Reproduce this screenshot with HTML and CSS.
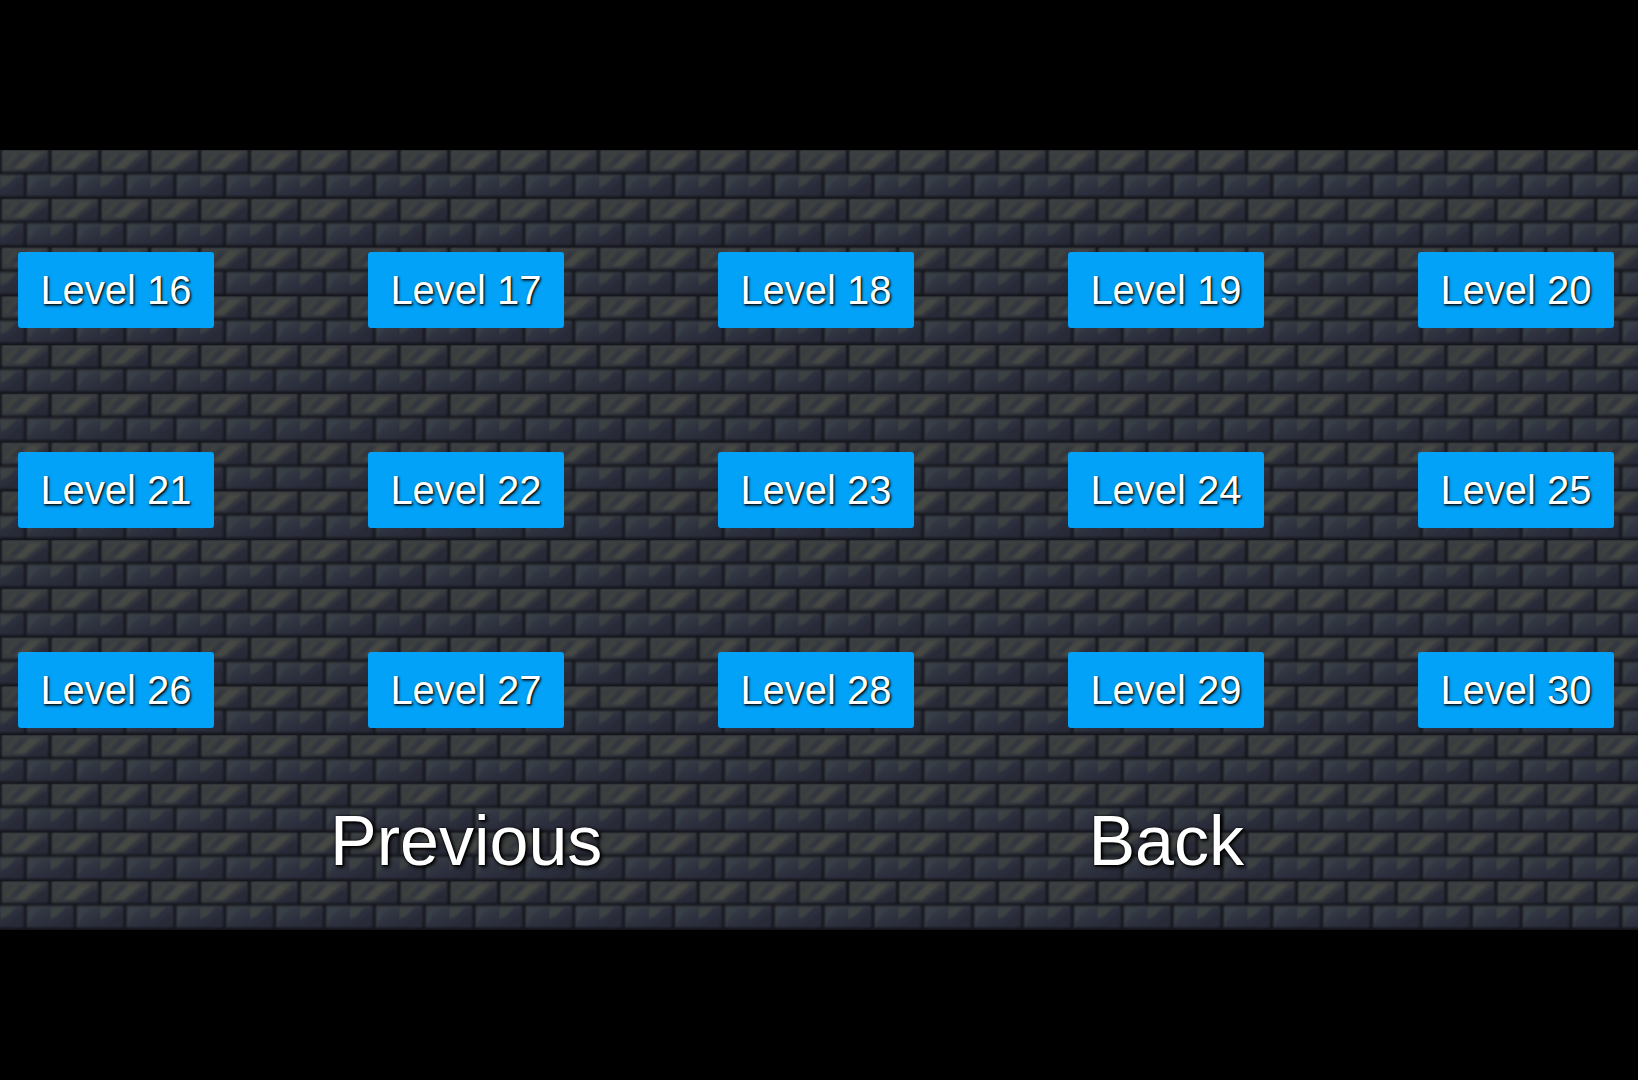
FILE: index.html
```html
<!DOCTYPE html>
<html lang="en">
<head>
  <meta charset="UTF-8">
  <meta name="viewport" content="width=device-width, initial-scale=1.0">
  <title>Levels</title>
  <link rel="stylesheet" href="styles.css">
</head>
<body>

  <main class="game">
    <!-- brick wall -->
    <svg class="wall" width="1638" height="780" aria-hidden="true">
      <defs>
        <linearGradient id="stone" x1="0" y1="0" x2="1" y2="1">
          <stop offset="0" stop-color="#3a3f42"/>
          <stop offset=".5" stop-color="#373a3f"/>
          <stop offset="1" stop-color="#252737"/>
        </linearGradient>
        <linearGradient id="slate" x1="0" y1="0" x2="1" y2="1">
          <stop offset="0" stop-color="#384048"/>
          <stop offset=".55" stop-color="#2c2f3d"/>
          <stop offset="1" stop-color="#252735"/>
        </linearGradient>
        <filter id="soft" color-interpolation-filters="sRGB"><feGaussianBlur stdDeviation="1"/></filter>
        <pattern id="bricks" x=".4" width="49.86" height="48.75" patternUnits="userSpaceOnUse">
          <rect width="50" height="49" fill="#14151b"/>
          <g filter="url(#soft)">
            <!-- top brick -->
            <rect x="1.6" y="0" width="46.4" height="21.8" fill="url(#stone)"/>
            <path d="M13 19L29 3H42L24 19Z" fill="#454843"/>
            <path d="M4 14L13 4H19L7 18Z" fill="#3e423e"/>
            <path d="M10 15L20 5H26L17 14Z" fill="#31353f"/>
            <path d="M27 21L46 7V21Z" fill="#282a38"/>
            <path d="M2.4 21V.8H47" fill="none" stroke="#464a48" stroke-width="1.3"/>
            <!-- bottom bricks -->
            <rect x="-22" y="24.5" width="45.5" height="21.8" fill="url(#slate)"/>
            <rect x="26.6" y="24.5" width="46" height="21.8" fill="url(#slate)"/>
            <path d="M0 38V26H16L7 35Z" fill="#3c4142"/>
            <path d="M6 46L21 31V46Z" fill="#282a38"/>
            <path d="M28 42V27H42L34 33Z" fill="#383f47"/>
            <path d="M27.4 46V25.4H50M0 25.4H22" fill="none" stroke="#3d4347" stroke-width="1.3"/>
          </g>
        </pattern>
      </defs>
      <rect width="1638" height="780" fill="url(#bricks)"/>
    </svg>

    <div class="levels">
      <button class="level">Level 16</button>
      <button class="level">Level 17</button>
      <button class="level">Level 18</button>
      <button class="level">Level 19</button>
      <button class="level">Level 20</button>
      <button class="level">Level 21</button>
      <button class="level">Level 22</button>
      <button class="level">Level 23</button>
      <button class="level">Level 24</button>
      <button class="level">Level 25</button>
      <button class="level">Level 26</button>
      <button class="level">Level 27</button>
      <button class="level">Level 28</button>
      <button class="level">Level 29</button>
      <button class="level">Level 30</button>
    </div>

    <nav class="menu">
      <a href="#" class="menu-link">Previous</a>
      <a href="#" class="menu-link">Back</a>
    </nav>
  </main>

</body>
</html>
```
FILE: styles.css
```css
* {
  margin: 0;
  padding: 0;
  box-sizing: border-box;
}
body {
  height: 1080px;
  padding-top: 150px;
  background-color: #000;
  font-family: "Liberation Sans", Arial, sans-serif;
  overflow: hidden;
}

.game {
  position: relative;
  width: 1638px;
  height: 780px;
  padding: 102px 0 0 18px;
  overflow: hidden;
}
/* background behind the buttons */
.wall {
  position: absolute;
  top: 0;
  left: 0;
  z-index: -1;
}

.levels {
  display: grid;
  grid-template-columns: repeat(5, 196px);
  grid-auto-rows: 76px;
  column-gap: 154px;
  row-gap: 124px;
}
.level {
  padding-top: 1px;
  border: 0;
  border-radius: 3px;
  background-color: #02a2f8;
  color: #fff;
  font-family: inherit;
  font-size: 40px;
  text-shadow: 1px 1px 2px #000, 1px 2px 3px rgba(0,0,0,0.5);
  cursor: pointer;
}

.menu {
  display: flex;
  justify-content: space-between;
  width: 914px;
  margin: 73px 0 0 312px;
}
.menu-link {
  color: #fff;
  font-size: 70px;
  line-height: 80px;
  text-decoration: none;
  text-shadow: 0 0 2px #000, 1px 1px 2px #000, 2px 2px 4px #000;
}
```
